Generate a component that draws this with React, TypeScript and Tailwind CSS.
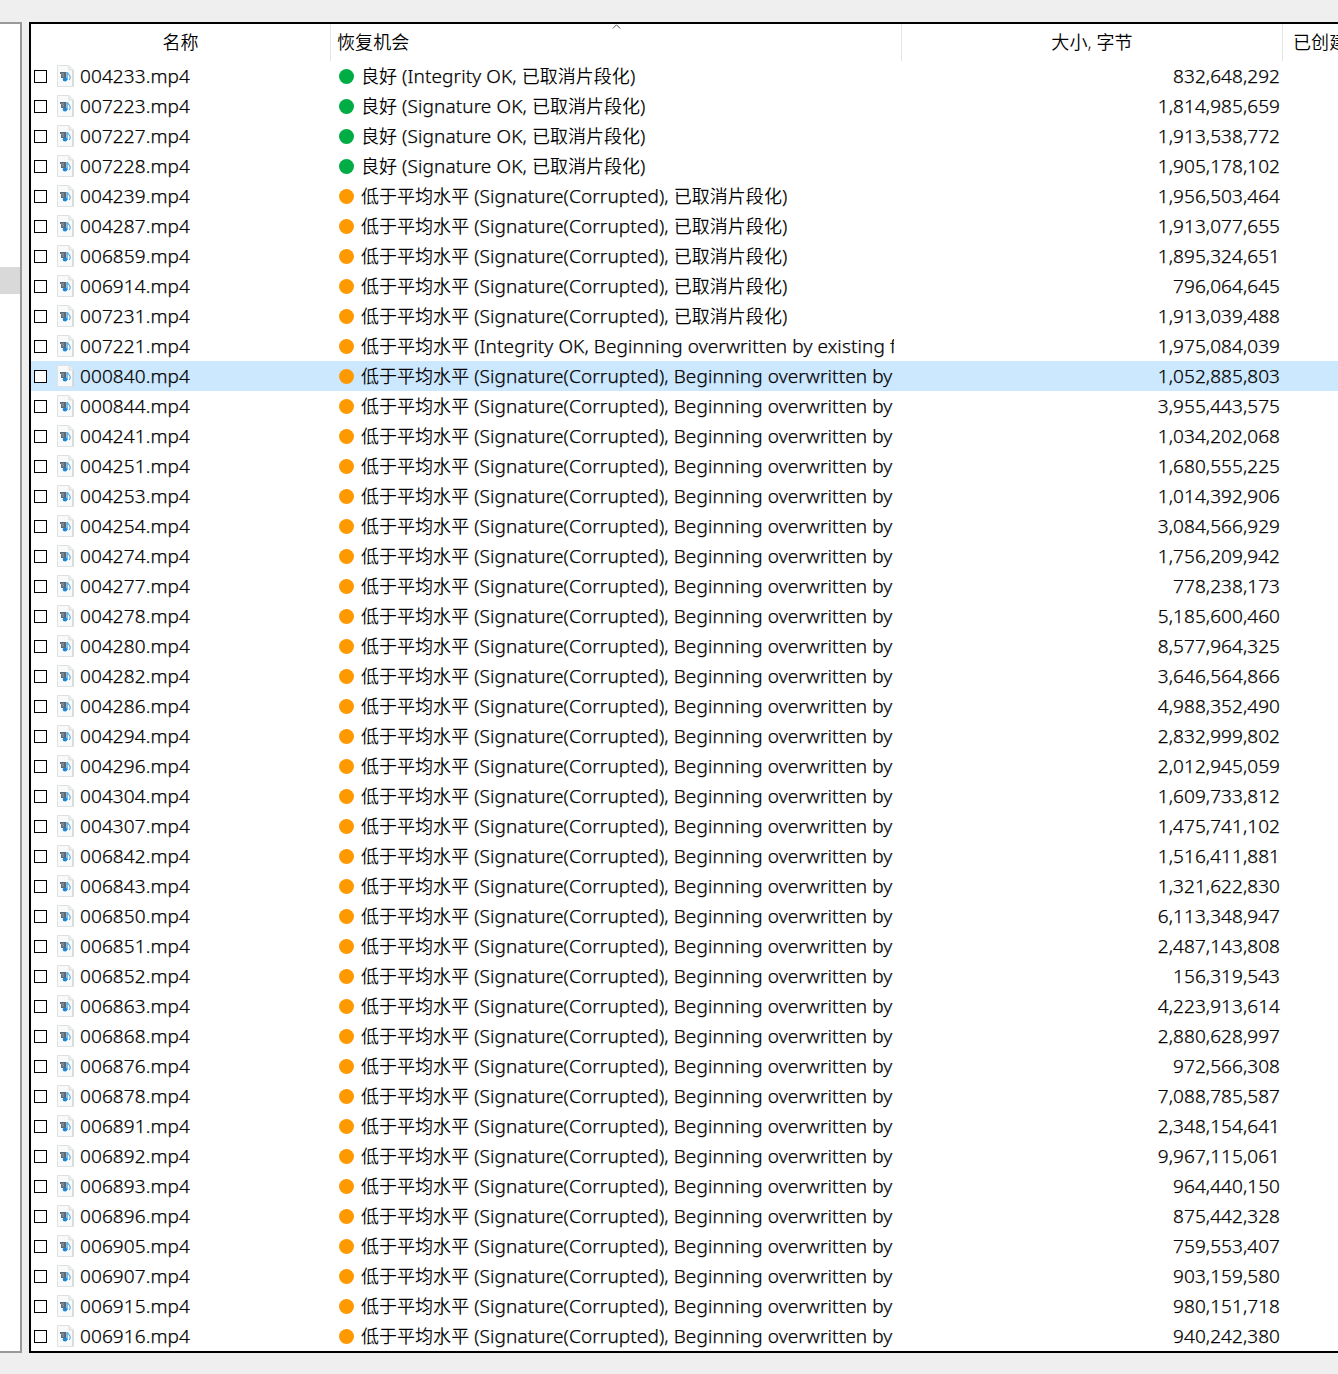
import clsx from 'clsx';

type Chance = 'good' | 'low';

interface FileRow {
  name: string;
  chance: Chance;
  note: string;
  size: string;
}

const NOTES = {
  integrity: '(Integrity OK, 已取消片段化)',
  signature: '(Signature OK, 已取消片段化)',
  corrupted: '(Signature(Corrupted), 已取消片段化)',
  overwrittenOk: '(Integrity OK, Beginning overwritten by existing f',
  overwritten: '(Signature(Corrupted), Beginning overwritten by',
};

const good = (name: string, note: string, size: string): FileRow => ({ name, chance: 'good', note, size });
const low = (name: string, note: string, size: string): FileRow => ({ name, chance: 'low', note, size });

const overwritten: [string, string][] = [
  ['000840', '1,052,885,803'],
  ['000844', '3,955,443,575'],
  ['004241', '1,034,202,068'],
  ['004251', '1,680,555,225'],
  ['004253', '1,014,392,906'],
  ['004254', '3,084,566,929'],
  ['004274', '1,756,209,942'],
  ['004277', '778,238,173'],
  ['004278', '5,185,600,460'],
  ['004280', '8,577,964,325'],
  ['004282', '3,646,564,866'],
  ['004286', '4,988,352,490'],
  ['004294', '2,832,999,802'],
  ['004296', '2,012,945,059'],
  ['004304', '1,609,733,812'],
  ['004307', '1,475,741,102'],
  ['006842', '1,516,411,881'],
  ['006843', '1,321,622,830'],
  ['006850', '6,113,348,947'],
  ['006851', '2,487,143,808'],
  ['006852', '156,319,543'],
  ['006863', '4,223,913,614'],
  ['006868', '2,880,628,997'],
  ['006876', '972,566,308'],
  ['006878', '7,088,785,587'],
  ['006891', '2,348,154,641'],
  ['006892', '9,967,115,061'],
  ['006893', '964,440,150'],
  ['006896', '875,442,328'],
  ['006905', '759,553,407'],
  ['006907', '903,159,580'],
  ['006915', '980,151,718'],
  ['006916', '940,242,380'],
];

const files: FileRow[] = [
  good('004233', NOTES.integrity, '832,648,292'),
  good('007223', NOTES.signature, '1,814,985,659'),
  good('007227', NOTES.signature, '1,913,538,772'),
  good('007228', NOTES.signature, '1,905,178,102'),
  low('004239', NOTES.corrupted, '1,956,503,464'),
  low('004287', NOTES.corrupted, '1,913,077,655'),
  low('006859', NOTES.corrupted, '1,895,324,651'),
  low('006914', NOTES.corrupted, '796,064,645'),
  low('007231', NOTES.corrupted, '1,913,039,488'),
  low('007221', NOTES.overwrittenOk, '1,975,084,039'),
  ...overwritten.map(([name, size]) => low(name, NOTES.overwritten, size)),
];

const SELECTED = '000840';

// Han characters run slightly smaller than the Latin text beside them
function MixedText({ text }: { text: string }) {
  return (
    <>
      {text.split(/([\u4e00-\u9fff]+)/).map((part, i) =>
        i % 2 === 1 ? (
          <span key={i} className="text-[18px] tracking-[0.03px] [-webkit-text-stroke:0]">
            {part}
          </span>
        ) : (
          part
        ),
      )}
    </>
  );
}

function MediaFileIcon() {
  return (
    <svg className="ml-[10px] h-[22px] w-[17px] shrink-0" viewBox="0 0 17 22">
      <path d="M.5 .5H12L16 4.500v17H.5z" fill="#f8f9fa" stroke="#dfe1e2" />
      <path d="M16 5v16.500" stroke="#c6c9cb" />
      <path d="M12 .5V5h4" fill="#edeff0" stroke="#dcdedf" />
      <path d="M3 7h6v2H3zM4 9h5v2H4zM4 11h5v2H4z" fill="#5d6a73" />
      <path d="M4 9h3M5 11h2" stroke="#a3b1ba" strokeWidth=".8" />
      <ellipse cx="8" cy="14.500" rx="2.300" ry="2" fill="#1f86cf" />
      <path d="M10 15V7" stroke="#2f93d9" strokeWidth="1.200" />
      <path d="M10.500 7.500c.5 1.800 2.700 2.300 2.700 4.700 0 1.200-.4 2-1 2.800" fill="none" stroke="#4fa9e0" strokeWidth="1.100" />
    </svg>
  );
}

function Row({ file }: { file: FileRow }) {
  return (
    <div
      className={clsx(
        'flex h-[30px] items-center whitespace-nowrap [-webkit-text-stroke:0.25px_#000]',
        file.name === SELECTED && 'bg-[#cce8ff]',
      )}
    >
      <div className="flex w-[308px] shrink-0 items-center pl-[3px]">
        <span className="h-[13px] w-[13px] shrink-0 border border-black bg-white" />
        <MediaFileIcon />
        <span className="ml-[6px] tracking-[0.1px]">{file.name}.mp4</span>
      </div>
      <div className="flex w-[555px] shrink-0 items-center overflow-hidden">
        <span
          className={clsx(
            'h-[15px] w-[15px] shrink-0 rounded-full',
            file.chance === 'good' ? 'bg-[#00ad45]' : 'bg-[#ff9900]',
          )}
        />
        <span className="ml-[7px] tracking-[0.1px]">
          <MixedText text={`${file.chance === 'good' ? '良好' : '低于平均水平'} ${file.note}`} />
        </span>
      </div>
      <div className="w-[386px] shrink-0 text-right tracking-[0.06px]">{file.size}</div>
    </div>
  );
}

export default function App() {
  return (
    <div className="flex h-[1374px] w-[1338px] overflow-hidden bg-[#efefef] pt-[22px] pb-[21px] font-['Noto_Sans','Noto_Sans_CJK_SC',sans-serif] text-[19px] leading-[30px] font-[350] text-black">
      <div className="w-[22px] shrink-0 border-y-2 border-r-2 border-[#999999] bg-white pt-[243px]">
        <div className="h-[27px] bg-[#d9d9d9]" />
      </div>

      <div className="ml-[7px] w-[1309px] shrink-0 overflow-hidden border-y-2 border-l-2 border-black bg-white">
        <div className="relative flex h-[37px] items-center text-[18px] tracking-[0.1px] whitespace-nowrap">
          <div className="flex h-full w-[300px] shrink-0 items-center justify-center border-r border-[#e5e5e5] pb-[2px]">名称</div>
          <div className="flex h-full w-[571px] shrink-0 items-center border-r border-[#e5e5e5] pb-[2px] pl-[6px]">恢复机会</div>
          <div className="flex h-full w-[381px] shrink-0 items-center justify-center border-r border-[#e5e5e5] pb-[2px]">大小, 字节</div>
          <div className="pb-[2px] pl-[10px]">已创建</div>
          <svg className="absolute top-0 left-[581px] h-[5px] w-[9px]" viewBox="0 0 9 5">
            <path d="M.8 4.500 4.500 .8l3.700 3.700" fill="none" stroke="#555" />
          </svg>
        </div>
        {files.map((file) => (
          <Row key={file.name} file={file} />
        ))}
      </div>
    </div>
  );
}
